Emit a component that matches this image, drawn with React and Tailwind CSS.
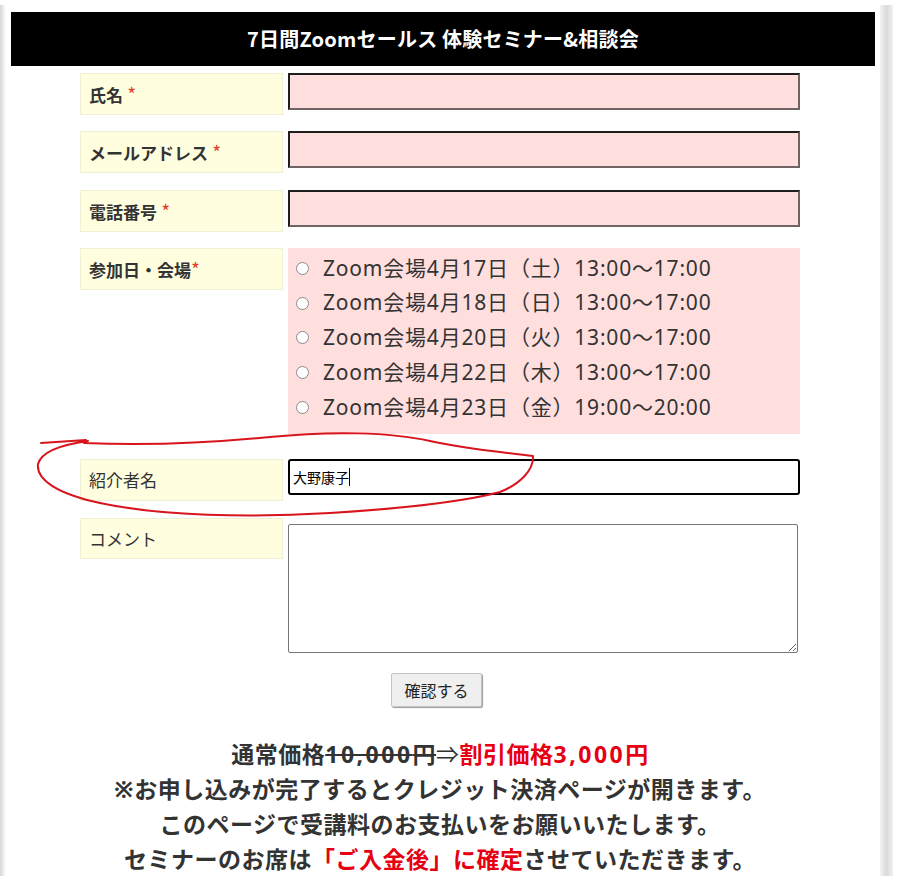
import React from "react";

const dates = [
  "Zoom会場4月17日（土）13:00〜17:00",
  "Zoom会場4月18日（日）13:00〜17:00",
  "Zoom会場4月20日（火）13:00〜17:00",
  "Zoom会場4月22日（木）13:00〜17:00",
  "Zoom会場4月23日（金）19:00〜20:00",
];

const labelBase =
  "w-[203px] shrink-0 bg-[#ffffe0] border border-[#f0f0d4] pl-[8px] flex items-center text-[17px] text-[#333]";

const pinkInput =
  "w-[512px] h-[37px] bg-[#ffdede] border-2 border-t-[#1e1e1e] border-l-[#1e1e1e] border-r-[#6e6464] border-b-[#6e6464]";

const Req = ({ space = true }) => (
  <span className="text-[#e2402c] font-normal text-[19px]">{space ? "\u00a0*" : "*"}</span>
);

const App = () => {
  return (
    <div className="relative min-h-[876px] w-[908px] bg-white flex font-['Noto_Sans','Noto_Sans_CJK_JP',sans-serif] overflow-hidden">
      {/* left shadow strip */}
      <div className="w-[6px] mt-[5px] bg-gradient-to-r from-[#d6d6d6] to-white" />

      <div className="w-[874px] px-[5px] pt-[12px]">
        <div className="h-[54px] bg-black flex items-center justify-center text-white font-bold text-[20px] tracking-[0.2px] font-['Noto_Sans_CJK_JP',sans-serif]">
          7日間Zoomセールス 体験セミナー&amp;相談会
        </div>

        <div className="ml-[69px] w-[720px] mt-[7px] font-['Noto_Sans_CJK_JP',sans-serif]">
          <div className="flex gap-[5px]">
            <div className={`${labelBase} h-[42px] font-bold`}>
              <span>氏名<Req /></span>
            </div>
            <div className={pinkInput} />
          </div>

          <div className="flex gap-[5px] mt-[16px]">
            <div className={`${labelBase} h-[42px] font-bold`}>
              <span>メールアドレス<Req /></span>
            </div>
            <div className={pinkInput} />
          </div>

          <div className="flex gap-[5px] mt-[17px]">
            <div className={`${labelBase} h-[42px] font-bold`}>
              <span>電話番号<Req /></span>
            </div>
            <div className={pinkInput} />
          </div>

          <div className="flex items-start gap-[5px] mt-[16px]">
            <div className={`${labelBase} h-[42px] font-bold`}>
              <span>参加日・会場<Req space={false} /></span>
            </div>
            <div className="w-[512px] h-[186px] bg-[#ffdede] pt-[3px] pl-[8px]">
              {dates.map((d, i) => (
                <label key={i} className="h-[34.75px] flex items-center">
                  <span className="w-[13px] h-[13px] rounded-full border border-[#8a8a8a] bg-white shrink-0" />
                  <span className="ml-[14px] text-[21px] tracking-[0.8px] text-[#333] font-['Noto_Sans','Noto_Sans_CJK_JP',sans-serif]">
                    {d}
                  </span>
                </label>
              ))}
            </div>
          </div>

          <div className="flex items-start gap-[5px] mt-[25px]">
            <div className={`${labelBase} h-[42px]`}>紹介者名</div>
            <div className="w-[512px] h-[36px] bg-white border-2 border-black rounded-[3px] flex items-center pl-[3px] text-[14px] text-black">
              大野康子
              <span className="w-px h-[18px] bg-black" />
            </div>
          </div>

          <div className="flex items-start gap-[5px] mt-[17px]">
            <div className={`${labelBase} h-[41px]`}>コメント</div>
            <textarea
              className="mt-[6px] w-[510px] h-[129px] border border-[#767676] rounded-[2px] bg-white"
              readOnly
            />
          </div>

          <button className="mt-[20px] ml-[311px] w-[91px] h-[34px] bg-[#efefef] border border-[#c4c4c4] rounded-[2px] shadow-[1px_1px_1px_#9a9a9a] text-[16px] text-[#222]">
            確認する
          </button>

          <div className="mt-[30px] text-center font-bold text-[23px] leading-[35px] tracking-[0.5px] text-[#333] font-['Noto_Sans','Noto_Sans_CJK_JP',sans-serif]">
            <p>
              通常価格<span className="line-through tracking-[2.5px]">10,000</span>
              <span className="line-through">円</span>
              <span className="font-normal">⇒</span>
              <span className="text-[#e60012]">
                割引価格<span className="tracking-[2.5px]">3,000</span>円
              </span>
            </p>
            <p>※お申し込みが完了するとクレジット決済ページが開きます。</p>
            <p>このページで受講料のお支払いをお願いいたします。</p>
            <p>
              セミナーのお席は<span className="text-[#e60012]">「ご入金後」に確定</span>させていただきます。
            </p>
          </div>
        </div>
      </div>

      {/* right scroll shadow */}
      <div className="w-[13px] mt-[5px] bg-gradient-to-r from-[#f4f4f4] via-[#dadada] to-[#f0f0f0]" />

      {/* red hand-drawn annotation */}
      <svg
        className="absolute left-0 top-0 pointer-events-none"
        width="908"
        height="876"
        viewBox="0 0 908 876"
        fill="none"
      >
        <path
          d="M41 443 L86 440 M88 441 C66 444 42 450 38 464 C36 480 58 494 100 503 C160 516 250 518 330 513 C410 508 470 500 500 492 C520 484 534 470 533 456 C505 452 470 450 430 441 C390 432 330 431 270 437 C210 443 150 446 84 443"
          stroke="#d8141c"
          strokeWidth="2"
          strokeLinecap="round"
          strokeLinejoin="round"
        />
      </svg>
    </div>
  );
};

export default App;
